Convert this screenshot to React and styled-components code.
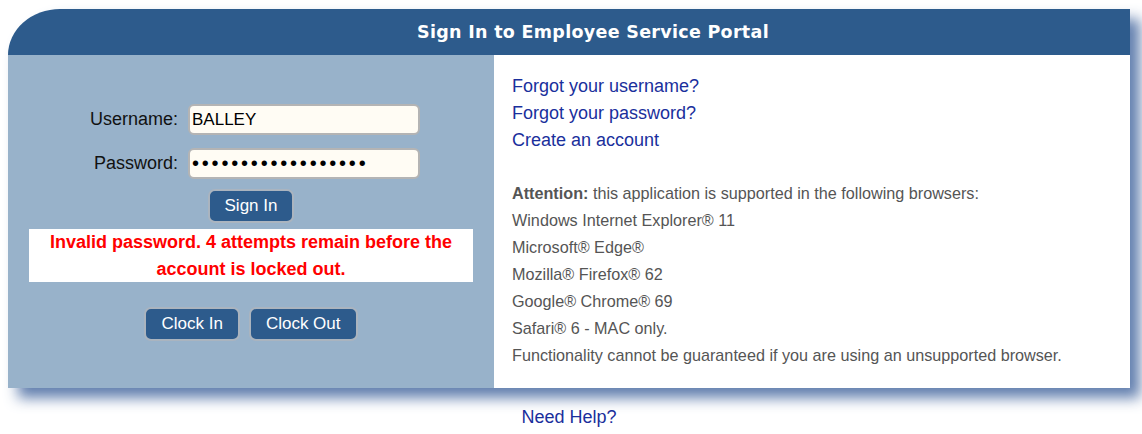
import styled, { createGlobalStyle } from "styled-components";

const GlobalStyle = createGlobalStyle`
  html, body {
    margin: 0;
    padding: 0;
    background: #ffffff;
  }
  body {
    font-family: "Liberation Sans", Arial, sans-serif;
  }
`;

const Page = styled.div`
  width: 1142px;
  height: 434px;
  padding: 9px 0 0 8px;
  box-sizing: border-box;
  overflow: hidden;
`;

const Card = styled.div`
  width: 1122px;
  border-top-left-radius: 52px 46px;
  overflow: hidden;
  box-shadow: 10px 10px 14px rgba(70, 105, 160, 0.85);
`;

const Header = styled.div`
  height: 46px;
  background: #2d5b8c;
  color: #ffffff;
  display: flex;
  align-items: center;
  justify-content: center;
  padding-left: 48px;
  font-family: "DejaVu Sans", Verdana, sans-serif;
  font-weight: bold;
  font-size: 17.5px;
  letter-spacing: 0.3px;
`;

const Body = styled.div`
  display: flex;
  height: 333px;
`;

const LeftPanel = styled.div`
  width: 486px;
  background: #98b2ca;
  display: flex;
  flex-direction: column;
  align-items: center;
  padding-top: 49px;
  box-sizing: border-box;
`;

const FormGrid = styled.div`
  display: grid;
  grid-template-columns: auto 232px;
  column-gap: 10px;
  row-gap: 13px;
  align-items: center;
  margin-left: 8px;
`;

const Label = styled.label`
  font-size: 18px;
  color: #111;
  text-align: right;
`;

const Input = styled.input`
  width: 232px;
  height: 31px;
  box-sizing: border-box;
  border: 2px solid #b4b4b4;
  border-radius: 6px;
  background: #fffcf4;
  font-family: "Liberation Sans", Arial, sans-serif;
  font-size: ${(p) => (p.type === "password" ? "20px" : "17px")};
  color: #000;
  padding: 0 2px;
  outline: none;
  letter-spacing: ${(p) => (p.type === "password" ? "2.8px" : "0")};
`;

const Button = styled.button`
  background: #2d5b8c;
  color: #ffffff;
  border: 2px solid #aab4bf;
  border-radius: 7px;
  height: 34px;
  padding: 0 15px;
  font-family: "Liberation Sans", Arial, sans-serif;
  font-size: 17px;
  cursor: pointer;
`;

const SignInRow = styled.div`
  margin-top: 10px;
  display: flex;
  justify-content: center;
`;

const ErrorBox = styled.div`
  margin-top: 6px;
  width: 444px;
  background: #ffffff;
  color: #ff0000;
  font-weight: bold;
  font-size: 18px;
  line-height: 26.5px;
  text-align: center;
  padding: 0 6px;
  box-sizing: border-box;
`;

const ClockRow = styled.div`
  margin-top: 25px;
  display: flex;
  gap: 9px;
`;

const RightPanel = styled.div`
  flex: 1;
  background: #ffffff;
  padding: 18px 0 0 18px;
  box-sizing: border-box;
`;

const LinkList = styled.div`
  display: flex;
  flex-direction: column;
`;

const Link = styled.a`
  color: #1a2f9c;
  font-size: 18px;
  line-height: 27px;
  text-decoration: none;
`;

const Notice = styled.div`
  margin-top: 26px;
  color: #555555;
  font-size: 16.2px;
  line-height: 27px;
`;

const Footer = styled.div`
  width: 1122px;
  margin-top: 16px;
  text-align: center;
`;

const browsers = [
  "Windows Internet Explorer® 11",
  "Microsoft® Edge®",
  "Mozilla® Firefox® 62",
  "Google® Chrome® 69",
  "Safari® 6 - MAC only.",
  "Functionality cannot be guaranteed if you are using an unsupported browser.",
];

export default function App() {
  return (
    <Page>
      <GlobalStyle />
      <Card>
        <Header>Sign In to Employee Service Portal</Header>
        <Body>
          <LeftPanel>
            <FormGrid>
              <Label htmlFor="user">Username:</Label>
              <Input id="user" type="text" defaultValue="BALLEY" />
              <Label htmlFor="pass">Password:</Label>
              <Input id="pass" type="password" defaultValue="xxxxxxxxxxxxxxxxxx" />
            </FormGrid>
            <SignInRow>
              <Button>Sign In</Button>
            </SignInRow>
            <ErrorBox>
              Invalid password. 4 attempts remain before the account is locked out.
            </ErrorBox>
            <ClockRow>
              <Button>Clock In</Button>
              <Button>Clock Out</Button>
            </ClockRow>
          </LeftPanel>
          <RightPanel>
            <LinkList>
              <Link href="#">Forgot your username?</Link>
              <Link href="#">Forgot your password?</Link>
              <Link href="#">Create an account</Link>
            </LinkList>
            <Notice>
              <div>
                <b>Attention:</b> this application is supported in the following browsers:
              </div>
              {browsers.map((b) => (
                <div key={b}>{b}</div>
              ))}
            </Notice>
          </RightPanel>
        </Body>
      </Card>
      <Footer>
        <Link href="#">Need Help?</Link>
      </Footer>
    </Page>
  );
}
